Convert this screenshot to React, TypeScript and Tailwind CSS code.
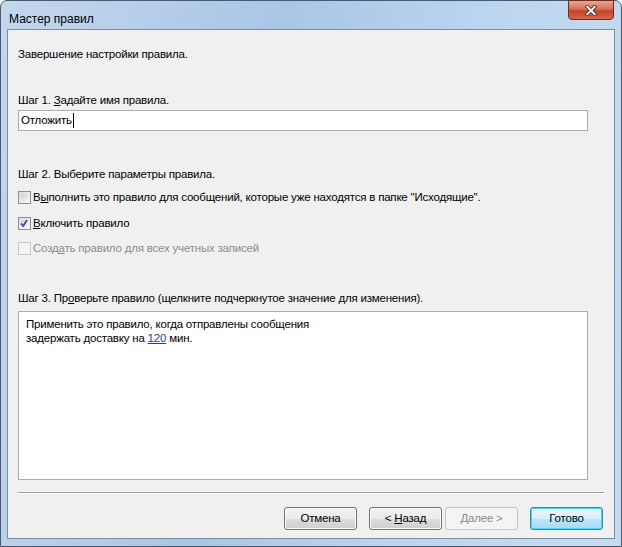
import React from 'react'

const font = { fontFamily: '"Liberation Sans", Arial, sans-serif' }

function Check({ checked, disabled }: { checked?: boolean; disabled?: boolean }) {
  return (
    <span
      className={
        'relative inline-flex h-[13px] w-[13px] shrink-0 items-center justify-center border ' +
        (disabled
          ? 'border-[#c8c8c8] bg-[#f4f4f4]'
          : 'border-[#8e8f8f] bg-gradient-to-br from-[#dcdcdc] to-[#f8f8f8]')
      }
    >
      {!disabled && <span className="absolute inset-[2px] bg-gradient-to-br from-[#cbcfd5] to-[#f6f6f6]" />}
      {checked && (
        <svg viewBox="0 0 13 13" className="absolute inset-0 h-[11px] w-[11px]">
          <path d="M2.5 6.5 L5 9.5 L9.5 2.5" fill="none" stroke="#3c4f9e" strokeWidth="2.2" />
        </svg>
      )}
    </span>
  )
}

function Btn({ children, kind }: { children: React.ReactNode; kind?: 'default' | 'disabled' }) {
  const base = 'flex h-[23px] w-[73px] items-center justify-center rounded-[3px] border'
  if (kind === 'disabled')
    return <div className={base + ' border-[#c4c4c4] bg-[#f4f4f4] text-[#8a8a8a]'}>{children}</div>
  if (kind === 'default')
    return (
      <div className={base + ' border-[#3c7fb1] bg-[linear-gradient(#eaf6fd_0%,#d9f0fc_50%,#bee6fd_51%,#a7d9f5_100%)] text-black shadow-[inset_0_0_0_1px_#48d8fb]'}>
        {children}
      </div>
    )
  return (
    <div className={base + ' border-[#707070] bg-[linear-gradient(#f2f2f2_0%,#ebebeb_50%,#dddddd_51%,#cfcfcf_100%)] text-black shadow-[inset_0_0_0_1px_#fcfcfc]'}>
      {children}
    </div>
  )
}

export default function App() {
  return (
    <div
      style={font}
      className="relative flex h-[547px] w-[622px] flex-col rounded-t-[7px] border border-[#4a5a6e] bg-[linear-gradient(100deg,#c3d7ec_0%,#a9c6e6_40%,#bcd6f0_70%,#c6dbef_100%)] text-[11.5px] tracking-[-0.2px] text-black"
    >
      {/* title bar */}
      <div className="flex h-[28px] items-center pl-[8px] pt-[8px] text-[12px] tracking-normal">Мастер правил</div>
      <div className="absolute right-[7px] top-[-1px] flex h-[20px] w-[46px] items-center justify-center rounded-b-[4px] border border-[#6b2c22] bg-[linear-gradient(#e8a593_0%,#d7705a_45%,#c4432a_55%,#d4654a_100%)]">
        <svg viewBox="0 0 14 12" className="h-[11px] w-[14px]">
          <path d="M3 2 L11 10 M11 2 L3 10" stroke="#4a2a26" strokeWidth="4" strokeLinecap="square" />
          <path d="M3 2 L11 10 M11 2 L3 10" stroke="#ffffff" strokeWidth="2.2" strokeLinecap="square" />
        </svg>
      </div>

      {/* client */}
      <div className="mx-[6px] flex flex-1 flex-col border border-[#7b8ca2] bg-[#f0f0f0] px-[10px]">
        <div className="mt-[17px] h-[15px] leading-[15px]">Завершение настройки правила.</div>

        <div className="mt-[31px] h-[15px] leading-[15px]">
          Шаг 1. <span className="underline">З</span>адайте имя правила.
        </div>
        <div className="mt-[2px] flex h-[21px] w-[570px] items-center border border-[#abadb3] bg-white px-[2px] leading-[15px]">
          Отложить<span className="ml-[1px] h-[15px] w-[1px] bg-black" />
        </div>

        <div className="mt-[36px] h-[15px] leading-[15px]">Шаг 2. Выберите параметры правила.</div>
        <div className="mt-[8px] flex h-[15px] items-center gap-[2px] leading-[15px]">
          <Check />
          <span>
            В<span className="underline">ы</span>полнить это правило для сообщений, которые уже находятся в папке "Исходящие".
          </span>
        </div>
        <div className="mt-[11px] flex h-[15px] items-center gap-[2px] leading-[15px]">
          <Check checked />
          <span>
            <span className="underline">В</span>ключить правило
          </span>
        </div>
        <div className="mt-[10px] flex h-[15px] items-center gap-[2px] leading-[15px] text-[#8d8d8d]">
          <Check disabled />
          <span>
            Созд<span className="underline">а</span>ть правило для всех учетных записей
          </span>
        </div>

        <div className="mt-[35px] h-[15px] leading-[15px]">
          Шаг 3. Пр<span className="underline">о</span>верьте правило (щелкните подчеркнутое значение для изменения).
        </div>
        <div className="mt-[5px] h-[169px] w-[570px] border border-[#abadb3] bg-white px-[7px] pt-[5px] leading-[14px]">
          <div>Применить это правило, когда отправлены сообщения</div>
          <div>
            задержать доставку на <span className="text-[#1d3fb8] underline">120</span> мин.
          </div>
        </div>

        <div className="mt-[12px] h-[2px] w-[586px] border-t border-b border-t-[#a0a0a0] border-b-white" />

        <div className="mt-[13px] flex justify-end pr-[1px]">
          <Btn>Отмена</Btn>
          <div className="ml-[12px] flex gap-[3px]">
            <Btn>
              &lt; <span className="ml-[3px] underline">Н</span>азад
            </Btn>
            <Btn kind="disabled">
              <span className="underline">Д</span>алее &gt;
            </Btn>
          </div>
          <div className="ml-[12px]">
            <Btn kind="default">Готово</Btn>
          </div>
        </div>
      </div>
      <div className="h-[7px]" />
    </div>
  )
}
